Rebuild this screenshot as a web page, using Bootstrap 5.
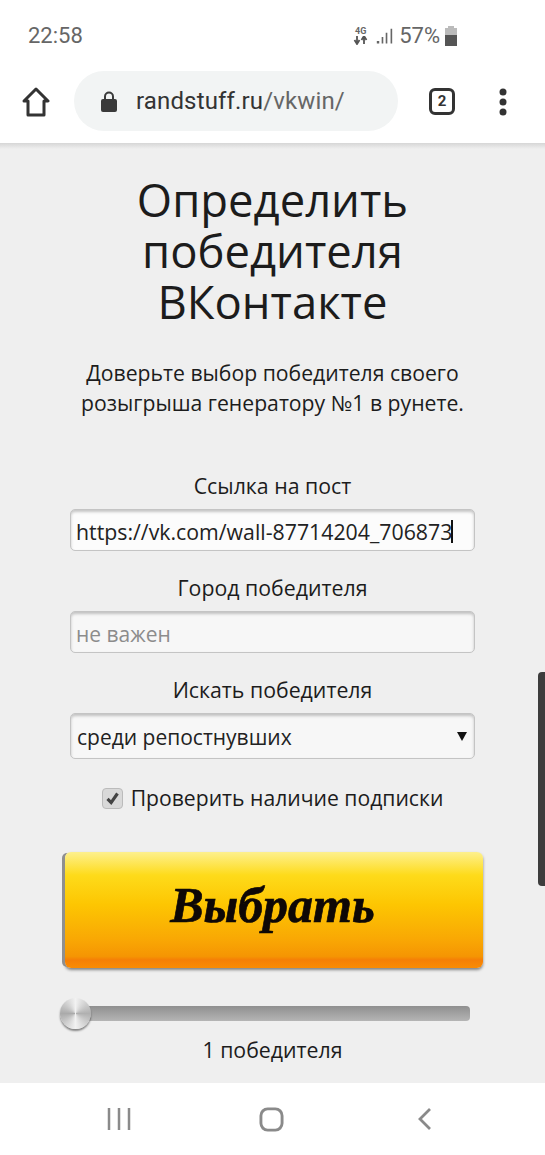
<!DOCTYPE html>
<html lang="ru">
<head>
    <meta charset="UTF-8">
    <meta name="viewport" content="width=device-width, initial-scale=1.0">
    <title>Определить победителя ВКонтакте</title>
    <link href="https://cdn.jsdelivr.net/npm/bootstrap@5.3.0/dist/css/bootstrap.min.css" rel="stylesheet">
    <style>
        html, body { height: 100%; }
        body {
            overflow: hidden;
            background: #fff;
            font-family: "Open Sans", sans-serif;
            color: #1c1c1c;
        }

        #phone { position: relative; width: 545px; height: 1155px; }

        /* Android status bar */
        #status-bar {
            height: 65px;
            padding: 22px 0 0 28px;
            font-family: Roboto, sans-serif;
            font-size: 22px;
            line-height: 28px;
            color: #666;
        }
        #status-icons { height: 28px; margin-right: 87px; }
        #status-icons .signal-icon { margin-right: 6px; }
        .net-label { font-size: 9px; line-height: 9px; font-weight: 700; width: 15px; text-align: center; }

        /* Browser toolbar */
        #toolbar { height: 78px; padding: 6px 0 0 22px; }
        #toolbar .home-icon { margin-top: 16px; }
        #toolbar .menu-icon { margin: 17px 0 0 43px; }
        #omnibox {
            width: 324px;
            height: 60px;
            margin-left: 24px;
            padding-left: 27px;
            border-radius: 30px;
            background: #f2f4f4;
            font-family: Roboto, sans-serif;
            font-size: 24px;
            letter-spacing: .15px;
            color: #333;
        }
        #omnibox span { color: #666; }
        #omnibox svg { margin-right: 19px; }
        #tab-count {
            width: 26px;
            height: 27px;
            margin: 17px 0 0 31px;
            border: 3px solid #333;
            border-radius: 6px;
            font-family: Roboto, sans-serif;
            font-size: 15px;
            font-weight: 700;
            line-height: 21px;
            text-align: center;
            color: #333;
        }

        /* Page */
        #page {
            height: 940px;
            padding-top: 31px;
            background: linear-gradient(#d6d6d6, #efefef 6px);
        }
        #page h1 { margin: 0 auto 31px; font-size: 45.400px; font-weight: 400; line-height: 51px; width: 340px; }
        .intro { font-size: 21.200px; line-height: 30px; margin-bottom: 56px; }
        #win-form { width: 405px; margin: 0 auto 0 70px; }
        #win-form label.field-label { display: block; font-size: 21.300px; line-height: 24px; margin-bottom: 11px; text-align: center; }
        #win-form .form-control, #win-form .form-select {
            height: 42px;
            margin-bottom: 25px;
            padding: 3px 5px 0;
            font-size: 21px;
            color: #222;
            background-color: #f7f7f7;
            border: 1px solid #c4c4c4;
            border-radius: 5px;
            box-shadow: inset 0 2px 3px rgba(0, 0, 0, .22);
        }
        #win-form #post-url { font-size: 21.300px; background-color: #fcfcfc; }
        #win-form .form-control::placeholder { color: #8c8c8c; opacity: 1; }
        #win-form .form-select {
            height: 46px;
            margin-bottom: 27px;
            padding: 4px 0 0 6px;
            background-image: url("data:image/svg+xml,%3Csvg xmlns='http://www.w3.org/2000/svg' width='10' height='10'%3E%3Cpath d='M0 1h10L5 10z' fill='%23111'/%3E%3C/svg%3E");
            background-size: 10px 10px;
            background-position: right 7px center;
        }
        /* text cursor sitting in the url field */
        .caret-bar {
            position: absolute;
            left: 381px;
            top: 11px;
            width: 2px;
            height: 23px;
            background: #111;
        }
        .check-row { font-size: 21.150px; line-height: 24px; gap: 8px; margin-bottom: 42px; }
        .check-box {
            width: 21px;
            height: 21px;
            border: 1px solid #bbb;
            border-radius: 4px;
            background: #d9d9d9;
        }

        #pick-btn {
            display: block;
            width: 418px;
            height: 116px;
            margin: 0 0 38px 65px;
            padding: 0 3px 10px 0;
            border: 0;
            border-radius: 6px;
            background: linear-gradient(#fdf08e 0, #fedb1a 20%, #fdc602 45%, #f9a804 75%, #f59503 90%, #f57f06 93%, #f98c04 100%);
            box-shadow: -4px 0 0 -1px #8f8f8f, 0 2px 3px rgba(0, 0, 0, .45);
            font-family: "Liberation Serif", serif;
            font-size: 50px;
            font-weight: 700;
            font-style: italic;
            -webkit-text-stroke: .7px #0e0806;
            color: #0e0806;
        }

        #slider-track {
            position: relative;
            width: 408px;
            height: 15px;
            margin: 0 0 17px 62px;
            border-radius: 4px;
            background: linear-gradient(#8f8f8f, #b5b5b5);
        }
        #slider-thumb {
            position: absolute;
            left: -2px;
            top: -8px;
            width: 31px;
            height: 31px;
            border-radius: 50%;
            background: conic-gradient(#f2f2f2, #b0b0b0, #f2f2f2, #aaa, #f2f2f2);
            box-shadow: 0 2px 2px rgba(0, 0, 0, .45);
        }
        .winners-count { font-size: 21.300px; line-height: 24px; }

        /* Android nav bar */
        #nav-bar { height: 72px; background: #fff; padding-left: 107px; gap: 128px; }
        #nav-bar .back-icon { margin-left: 5px; }

        /* Overlay scrollbar */
        #scroll-thumb {
            position: absolute;
            right: 0;
            top: 672px;
            width: 7px;
            height: 214px;
            background: #3d3d3d;
            border-radius: 4px 0 0 4px;
        }
    </style>
</head>
<body>
    <div id="phone">
        <div id="status-bar" class="d-flex">
            <div>22:58</div>
            <div id="status-icons" class="d-flex align-items-center ms-auto">
                <div class="me-2">
                    <div class="net-label">4G</div>
                    <svg width="15" height="9" viewBox="0 0 15 9" class="d-block"><path d="M4 0v6M1.500 4 4 8l2.500-4M11 8V2M8.500 4 11 0l2.500 4" fill="none" stroke="#555" stroke-width="1.800"/></svg>
                </div>
                <svg class="signal-icon" width="17" height="19" viewBox="0 0 21 19"><path d="M1 15h3v3H1zM7 10h2v8H7zM12 5h2v13h-2zM18 0h2v18h-2z" fill="#666"/></svg>
                <span>57%</span>
                <svg width="14" height="20" viewBox="0 0 14 20" class="ms-1"><path d="M4 0h6v2h3v7H1V2h3z" fill="#bbb"/><path d="M1 9h12v11H1z" fill="#555"/></svg>
            </div>
        </div>

        <div id="toolbar" class="d-flex align-items-start">
            <svg class="home-icon" width="28" height="30" viewBox="0 0 28 30"><path d="M2 14 14 2l12 12h-4v14H6V14z" fill="none" stroke="#333" stroke-width="3" stroke-linejoin="round"/></svg>
            <div id="omnibox" class="d-flex align-items-center">
                <svg width="16" height="21" viewBox="0 0 16 21" class="flex-shrink-0"><path d="M4 8V5.500a4 4 0 0 1 8 0V8" fill="none" stroke="#3a3a3a" stroke-width="2"/><rect y="8" width="16" height="13" rx="2" fill="#3a3a3a"/></svg>
                <div>randstuff.ru<span>/vkwin/</span></div>
            </div>
            <div id="tab-count">2</div>
            <svg class="menu-icon" width="10" height="28" viewBox="0 0 10 28"><circle cx="5" cy="4" r="3.500" fill="#333"/><circle cx="5" cy="14" r="3.500" fill="#333"/><circle cx="5" cy="24" r="3.500" fill="#333"/></svg>
        </div>

        <main id="page" class="text-center">
            <h1>Определить победителя ВКонтакте</h1>
            <p class="intro">Доверьте выбор победителя своего<br>розыгрыша генератору №1 в рунете.</p>

            <form id="win-form">
                <label class="field-label" for="post-url">Ссылка на пост</label>
                <div class="position-relative">
                    <input id="post-url" class="form-control" type="text" value="https://vk.com/wall-87714204_706873">
                    <div class="caret-bar"></div>
                </div>
                <label class="field-label" for="city">Город победителя</label>
                <input id="city" class="form-control" type="text" placeholder="не важен">
                <label class="field-label" for="search-in">Искать победителя</label>
                <select id="search-in" class="form-select">
                    <option>среди репостнувших</option>
                </select>
                <div class="check-row d-flex align-items-center justify-content-center">
                    <svg class="check-box flex-shrink-0" viewBox="0 0 21 21"><path d="M5 11l4 4 7-10" fill="none" stroke="#444" stroke-width="3.500"/></svg>
                    <span>Проверить наличие подписки</span>
                </div>
            </form>

            <button id="pick-btn" class="btn" type="button">Выбрать</button>

            <div id="slider-track"><div id="slider-thumb"></div></div>
            <div class="winners-count">1 победителя</div>
        </main>

        <div id="nav-bar" class="d-flex align-items-center">
            <svg width="24" height="24" viewBox="0 0 24 24"><path d="M2 1v22M12 1v22M22 1v22" stroke="#8a8a8a" stroke-width="2.500"/></svg>
            <svg width="25" height="25" viewBox="0 0 26 26"><rect x="2" y="2" width="22" height="22" rx="7" fill="none" stroke="#8a8a8a" stroke-width="3"/></svg>
            <svg class="back-icon" width="16" height="24" viewBox="0 0 16 24"><path d="M13 2 3 12l10 10" fill="none" stroke="#8a8a8a" stroke-width="2.800"/></svg>
        </div>

        <div id="scroll-thumb"></div>
    </div>
    <script src="https://cdn.jsdelivr.net/npm/bootstrap@5.3.0/dist/js/bootstrap.bundle.min.js"></script>
</body>
</html>
